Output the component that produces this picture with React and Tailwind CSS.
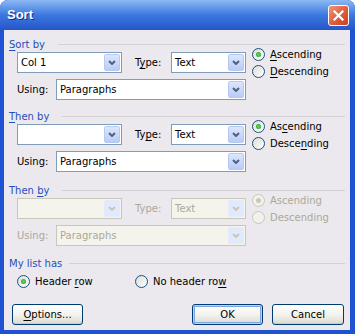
import React from 'react';

const U = ({ children }) => (
  <span className="underline decoration-1 underline-offset-[2px]">{children}</span>
);

const Arrow = ({ disabled }) => (
  <svg width="8" height="5" viewBox="0 0 8 5">
    <path
      d="M1 1 L4 4 L7 1"
      fill="none"
      stroke={disabled ? '#C9C7BA' : '#4D6185'}
      strokeWidth="2"
    />
  </svg>
);

const Combo = ({ className, value, disabled }) => (
  <div
    className={`flex h-[21px] items-stretch border ${
      disabled ? 'border-[#C9C7BA] bg-[#F4F3EC] text-[#ACA899]' : 'border-[#7F9DB9] bg-white text-black'
    } ${className}`}
  >
    <div className="flex flex-1 items-center pl-[3px]">{value}</div>
    <div
      className={`m-px flex w-[16px] items-center justify-center rounded-[2px] border ${
        disabled
          ? 'border-[#E3EBFC] bg-[#E1EAFD]'
          : 'border-[#B6C9F3] bg-linear-to-b from-[#DCE6FD] to-[#B9CCF6]'
      }`}
    >
      <Arrow disabled={disabled} />
    </div>
  </div>
);

const Radio = ({ checked, disabled, children, className = '' }) => (
  <div className={`flex items-center gap-[5px] ${className}`}>
    <div
      className={`flex h-[13px] w-[13px] items-center justify-center rounded-full border ${
        disabled
          ? 'border-[#CAC8BB] bg-[#F2F1EC]'
          : 'border-[#1C5180] bg-linear-to-br from-[#DCDCD7] to-white'
      }`}
    >
      {checked && (
        <div
          className={`h-[5px] w-[5px] rounded-full ${
            disabled ? 'bg-[#CAC8BB]' : 'bg-radial from-[#5EDC5E] to-[#1C9A1C]'
          }`}
        />
      )}
    </div>
    <span className={disabled ? 'text-[#ACA899]' : 'text-black'}>{children}</span>
  </div>
);

const GroupLabel = ({ children, gap = 'ml-[13px]' }) => (
  <div className="flex h-[13px] items-center pl-[5px] pr-[5px]">
    <span className="text-[#1F4EBF]">{children}</span>
    <div className={`h-px flex-1 bg-[#D3D1D6] ${gap}`} />
  </div>
);

const SortSection = ({ label, first, disabled, typeLabel, asc, desc, className }) => (
  <div className={className}>
    <GroupLabel>{label}</GroupLabel>
    <div className="mt-px flex pl-[13px]">
      <div className="flex w-[229px] flex-col gap-[6px]">
        <div className="flex items-center">
          <Combo className="w-[105px]" value={first} disabled={disabled} />
          <span className={`ml-[13px] w-[36px] ${disabled ? 'text-[#ACA899]' : ''}`}>{typeLabel}</span>
          <Combo className="w-[75px]" value="Text" disabled={disabled} />
        </div>
        <div className="flex items-center">
          <span className={`w-[39px] ${disabled ? 'text-[#ACA899]' : ''}`}>Using:</span>
          <Combo className="w-[190px]" value="Paragraphs" disabled={disabled} />
        </div>
      </div>
      <div className="-mt-[6px] ml-[6px] flex flex-col">
        <Radio checked disabled={disabled} className="h-[17px]">{asc}</Radio>
        <Radio disabled={disabled} className="h-[16px]">{desc}</Radio>
      </div>
    </div>
  </div>
);

const XpButton = ({ children, isDefault, className = '' }) => (
  <div
    className={`flex h-[21px] items-center justify-center rounded-[3px] border border-[#003C74] bg-linear-to-b from-white via-[#F3F3EF] to-[#DCDAD0] ${
      isDefault ? 'shadow-[inset_0_0_0_1px_#BCD3F8,inset_0_0_0_2px_#7FA4E6]' : 'shadow-[inset_0_-1px_0_#D0CCC0]'
    } ${className}`}
  >
    {children}
  </div>
);

export default function App() {
  return (
    <div className="h-[334px] w-[355px] bg-white font-['DejaVu_Sans',sans-serif] text-[10px] text-black">
      <div className="flex h-full w-full flex-col rounded-t-[8px] bg-[#1E52D2]">
        {/* title bar */}
        <div className="flex h-[30px] items-center justify-between rounded-t-[8px] bg-linear-to-b from-[#8CB9F3] via-[#3C77DF] to-[#2556C8] pl-[7px] pr-[6px]">
          <span className="font-['Liberation_Sans',sans-serif] text-[13px] font-bold text-white [text-shadow:1px_1px_0_#0B2A8A]">
            Sort
          </span>
          <div className="flex h-[21px] w-[21px] items-center justify-center rounded-[3px] border border-white bg-linear-to-br from-[#F0967A] via-[#E0603E] to-[#C9401E]">
            <svg width="11" height="11" viewBox="0 0 11 11">
              <path d="M1.5 1.5 L9.5 9.5 M9.5 1.5 L1.5 9.5" stroke="white" strokeWidth="2.2" strokeLinecap="square" />
            </svg>
          </div>
        </div>

        {/* client area */}
        <div className="mb-[4px] ml-[4px] mr-[5px] flex flex-1 flex-col bg-[#EBE9ED] pt-[8px]">
          <SortSection
            label={<><U>S</U>ort by</>}
            first="Col 1"
            typeLabel={<>T<U>y</U>pe:</>}
            asc={<><U>A</U>scending</>}
            desc={<><U>D</U>escending</>}
            className="mb-[10px]"
          />
          <SortSection
            label={<><U>T</U>hen by</>}
            first=""
            typeLabel={<>Ty<U>p</U>e:</>}
            asc={<>As<U>c</U>ending</>}
            desc={<>Desce<U>n</U>ding</>}
            className="mb-[12px]"
          />
          <SortSection
            label={<>Then <U>b</U>y</>}
            first=""
            disabled
            typeLabel="Type:"
            asc="Ascending"
            desc="Descending"
            className="mb-[11px]"
          />

          <GroupLabel gap="ml-[7px]">My list has</GroupLabel>
          <div className="mt-[5px] flex h-[13px] items-center pl-[13px]">
            <Radio checked className="w-[118px] gap-[4px]">
              Header <U>r</U>ow
            </Radio>
            <Radio>
              No header ro<U>w</U>
            </Radio>
          </div>

          <div className="mt-[16px] flex items-center pl-[8px] pr-[6px]">
            <XpButton className="w-[71px]">
              <span><U>O</U>ptions...</span>
            </XpButton>
            <div className="flex-1" />
            <XpButton isDefault className="w-[71px]">OK</XpButton>
            <XpButton className="ml-[9px] w-[72px]">Cancel</XpButton>
          </div>
        </div>
      </div>
    </div>
  );
}
